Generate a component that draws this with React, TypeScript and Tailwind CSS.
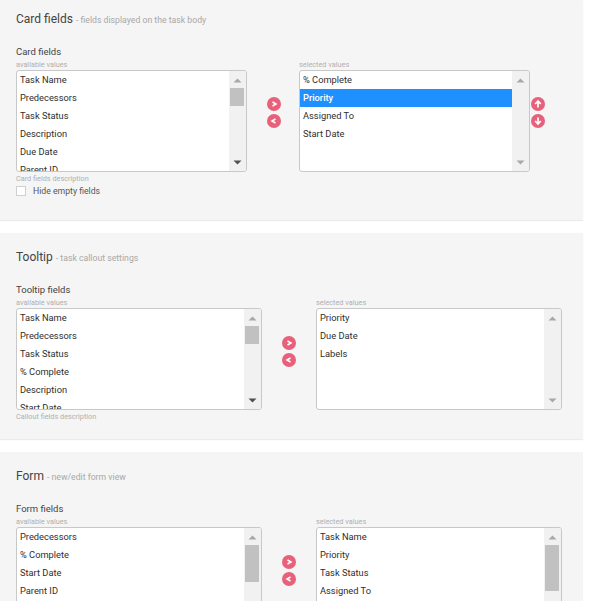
import React from "react";

type ListProps = {
  items: string[];
  width: string;
  selected?: string;
  thumb?: string;
  thumbTop?: string;
  active?: boolean;
};

function Tri({ up, dark }: { up: boolean; dark: boolean }) {
  return (
    <svg width="17" height="18" viewBox="0 0 17 18" className="block shrink-0">
      <path d={up ? "M4.5 11.5 L8.5 7.5 L12.5 11.5 Z" : "M4.5 7.5 L12.5 7.5 L8.5 11.5 Z"} fill={dark ? "#505050" : "#a8a8a8"} />
    </svg>
  );
}

function ListBox({ items, width, selected, thumb, thumbTop, active }: ListProps) {
  return (
    <div className={`${width} h-[102px] flex bg-white border border-[#c8c8c8] rounded-[3px] overflow-hidden`}>
      <div className="flex-1 min-w-0 overflow-hidden">
        {items.map((t) => (
          <div
            key={t}
            className={`h-[18px] leading-[18px] pl-[3px] text-[9.3px] whitespace-nowrap ${
              t === selected ? "bg-[#1e90ff] text-white font-medium" : "text-[#2e2e2e]"
            }`}
          >
            {t}
          </div>
        ))}
      </div>
      <div className="w-[17px] shrink-0 bg-[#f1f1f1] flex flex-col justify-between relative">
        <Tri up dark={false} />
        {thumb && <div className={`absolute left-[1px] w-[14px] bg-[#c1c1c1] ${thumb} ${thumbTop}`} />}
        <Tri up={false} dark={!!active} />
      </div>
    </div>
  );
}

function Round({ kind }: { kind: "right" | "left" | "up" | "down" }) {
  const d = {
    right: "M5.5 5 L9 7 L5.5 9",
    left: "M8.5 5 L5 7 L8.5 9",
    up: "M4.2 7 L7 4 L9.8 7 M7 4.5 V10.5",
    down: "M4.2 7 L7 10 L9.8 7 M7 3.5 V9.5",
  }[kind];
  return (
    <div className="w-[14px] h-[14px] rounded-full bg-[#e8617a] flex items-center justify-center">
      <svg width="14" height="14" viewBox="0 0 14 14" fill="none" stroke="#ffffff" strokeWidth={kind === "up" || kind === "down" ? 1.7 : 1.5}>
        <path d={d} />
      </svg>
    </div>
  );
}

function Small({ children }: { children: React.ReactNode }) {
  return <div className="text-[7.3px] leading-[10px] text-[#b0b0b0]">{children}</div>;
}

function Header({ title, sub }: { title: string; sub: string }) {
  return (
    <div className="flex items-baseline h-[20px] leading-[20px]">
      <span className="text-[12px] text-[#444444]">{title}</span>
      <span className="text-[8.7px] text-[#a8a8a8] ml-[3px]">- {sub}</span>
    </div>
  );
}

const card = ["Task Name", "Predecessors", "Task Status", "Description", "Due Date", "Parent ID", "Labels"];
const tip = ["Task Name", "Predecessors", "Task Status", "% Complete", "Description", "Start Date", "Parent ID"];

export default function App() {
  return (
    <div className="w-[589px] h-[601px] overflow-hidden bg-white [font-family:Roboto,sans-serif]">
      <div className="w-[583px] flex flex-col gap-[13px]">
        {/* Card fields */}
        <section className="h-[220px] bg-[#f5f5f5] pl-4 pt-[9px] shadow-[0_1px_1px_rgba(0,0,0,0.08)]">
          <Header title="Card fields" sub="fields displayed on the task body" />
          <div className="mt-[16px] text-[9.5px] leading-[14px] text-[#444444]">Card fields</div>
          <div className="flex mt-[1px]">
            <div className="w-[231px]">
              <Small>available values</Small>
              <ListBox items={card} width="w-[231px]" thumb="h-[18px]" thumbTop="top-[17px]" active />
            </div>
            <div className="w-[52px] flex flex-col items-center gap-[3px] pt-[37px] pl-[1px]">
              <Round kind="right" />
              <Round kind="left" />
            </div>
            <div className="w-[231px]">
              <Small>selected values</Small>
              <ListBox items={["% Complete", "Priority", "Assigned To", "Start Date"]} selected="Priority" width="w-[231px]" />
            </div>
            <div className="ml-[1px] flex flex-col gap-[3px] pt-[37px]">
              <Round kind="up" />
              <Round kind="down" />
            </div>
          </div>
          <div className="mt-[2px]"><Small>Card fields description</Small></div>
          <label className="flex items-center h-[12px] leading-[12px] mt-[1px]">
            <span className="w-[10px] h-[10px] bg-white border border-[#d0d0d0]" />
            <span className="ml-[7px] text-[8.7px] text-[#555555]">Hide empty fields</span>
          </label>
        </section>

        {/* Tooltip */}
        <section className="h-[206px] bg-[#f5f5f5] pl-4 pt-[14px] shadow-[0_1px_1px_rgba(0,0,0,0.08)]">
          <Header title="Tooltip" sub="task callout settings" />
          <div className="mt-[16px] text-[9.5px] leading-[14px] text-[#444444]">Tooltip fields</div>
          <div className="flex mt-[1px]">
            <div className="w-[246px]">
              <Small>available values</Small>
              <ListBox items={tip} width="w-[246px]" thumb="h-[18px]" thumbTop="top-[17px]" active />
            </div>
            <div className="w-[54px] flex flex-col items-center gap-[3px] pt-[38px]">
              <Round kind="right" />
              <Round kind="left" />
            </div>
            <div className="w-[246px]">
              <Small>selected values</Small>
              <ListBox items={["Priority", "Due Date", "Labels"]} width="w-[246px]" />
            </div>
          </div>
          <div className="mt-[2px]"><Small>Callout fields description</Small></div>
        </section>

        {/* Form */}
        <section className="h-[206px] bg-[#f5f5f5] pl-4 pt-[14px]">
          <Header title="Form" sub="new/edit form view" />
          <div className="mt-[16px] text-[9.5px] leading-[14px] text-[#444444]">Form fields</div>
          <div className="flex mt-[1px]">
            <div className="w-[246px]">
              <Small>available values</Small>
              <ListBox items={["Predecessors", "% Complete", "Start Date", "Parent ID", "Description"]} width="w-[246px]" thumb="h-[37px]" thumbTop="top-[17px]" active />
            </div>
            <div className="w-[54px] flex flex-col items-center gap-[3px] pt-[38px]">
              <Round kind="right" />
              <Round kind="left" />
            </div>
            <div className="w-[246px]">
              <Small>selected values</Small>
              <ListBox items={["Task Name", "Priority", "Task Status", "Assigned To", "Due Date"]} width="w-[246px]" thumb="h-[46px]" thumbTop="top-[17px]" active />
            </div>
          </div>
        </section>
      </div>
    </div>
  );
}
